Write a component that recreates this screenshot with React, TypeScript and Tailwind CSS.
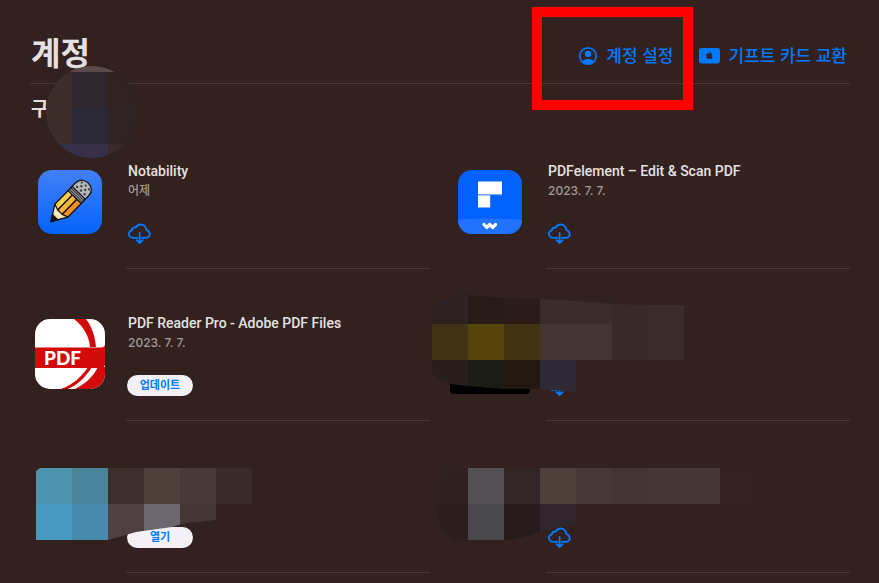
import type { ReactNode } from 'react';

const BG = '#32211f';

/** x, y, width, height, fill */
type Cell = [number, number, number, number, string];

interface MosaicProps {
  id: string;
  width: number;
  height: number;
  outline: string;
  cells: Cell[];
  className: string;
}

function Mosaic({ id, width, height, outline, cells, className }: MosaicProps) {
  return (
    <svg
      width={width}
      height={height}
      viewBox={`0 0 ${width} ${height}`}
      className={`absolute pointer-events-none ${className}`}
      aria-hidden="true"
    >
      <clipPath id={id}>
        <path d={outline} />
      </clipPath>
      <g clipPath={`url(#${id})`} shapeRendering="crispEdges">
        {cells.map(([x, y, w, h, fill]) => (
          <rect key={`${x}-${y}`} x={x} y={y} width={w} height={h} fill={fill} />
        ))}
      </g>
    </svg>
  );
}

function AccountIcon() {
  return (
    <svg width="20" height="20" viewBox="0 0 20 20" fill="none" aria-hidden="true">
      <clipPath id="account-ring">
        <circle cx="10" cy="10" r="8" />
      </clipPath>
      <circle cx="10" cy="10" r="8.2" stroke="currentColor" strokeWidth="1.7" />
      <circle cx="10" cy="8" r="3.2" fill="currentColor" />
      <ellipse cx="10" cy="17.3" rx="6.4" ry="4.4" fill="currentColor" clipPath="url(#account-ring)" />
    </svg>
  );
}

function GiftCardIcon() {
  return (
    <svg width="21" height="16" viewBox="0 0 21 16" aria-hidden="true">
      <rect width="21" height="15.5" rx="2.4" fill="currentColor" />
      <path
        d="M10.4 5.6c.5 0 1-.5 1.7-.4.6 0 1 .3 1.3.7-1.3.8-1.1 2.5.2 3.1-.3.9-1 1.9-1.7 1.9-.5 0-.8-.3-1.4-.3s-.9.3-1.4.3C8 10.9 7.2 9.3 7.2 7.8c0-1.6.9-2.5 1.9-2.5.6 0 1 .3 1.3.3z"
        fill={BG}
      />
      <path d="M10.4 5.1c0-1 .7-1.8 1.7-1.9.1 1-.7 1.9-1.7 1.9z" fill={BG} />
    </svg>
  );
}

function CloudDownloadIcon() {
  return (
    <svg width="23" height="22" viewBox="0 0 24 22" fill="none" aria-hidden="true">
      <path
        d="M9.8 15H5.6C3.1 15 1 13.3 1 11c0-2 1.3-3.4 3.1-3.7C4 5.2 5.8 3.8 7.9 4.3 8.9 2.2 11 1.1 13.2 1.1c3.4 0 5.8 2.5 5.9 5.8 2.1.5 3.6 2 3.6 4 0 2.4-1.9 4.1-4.3 4.1h-4"
        stroke="currentColor"
        strokeWidth="1.9"
        strokeLinecap="round"
        strokeLinejoin="round"
      />
      <path
        d="M12.1 9.8v10.5M8.9 17.4l3.2 3 3.2-3"
        stroke="currentColor"
        strokeWidth="1.9"
        strokeLinecap="round"
        strokeLinejoin="round"
      />
    </svg>
  );
}

function NotabilityIcon() {
  return (
    <svg width="64" height="64" viewBox="0 0 64 64" role="img" aria-label="Notability">
      <defs>
        <linearGradient id="nota-bg" x1="0" y1="0" x2="0" y2="1">
          <stop offset="0" stopColor="#4380f6" />
          <stop offset="1" stopColor="#0463fb" />
        </linearGradient>
      </defs>
      <rect width="64" height="64" rx="14" fill="url(#nota-bg)" />
      <g
        transform="translate(13 51.5) rotate(-46) scale(1 1.15)"
        stroke="#17130f"
        strokeWidth="1.2"
        strokeLinejoin="round"
      >
        <path d="M0 0 15-8v16z" fill="#f6e6bd" />
        <path d="M0 0 6-3.2v6.4z" fill="#17130f" />
        <path d="M15-8h19v5.3H13z" fill="#fbd04a" />
        <path d="M13-2.7h21v5.4H13z" fill="#f9b53b" />
        <path d="M13 2.7h21V8H15z" fill="#ef9027" />
        <path d="M34-8h6V8h-6z" fill="#8d9299" />
        <path d="M36-8V8M38-8V8" strokeWidth=".8" />
        <path d="M40-8h5c5.5 0 8.5 3.5 8.5 8S50.5 8 45 8h-5z" fill="#b4b7ba" />
      </g>
      <g transform="translate(13 51.5) rotate(-46) scale(1 1.15)" fill="#34353a">
        <circle cx="43" cy="-4.5" r="1.1" />
        <circle cx="43" cy="0" r="1.1" />
        <circle cx="43" cy="4.5" r="1.1" />
        <circle cx="46.5" cy="-2.3" r="1.1" />
        <circle cx="46.5" cy="2.3" r="1.1" />
        <circle cx="49.5" cy="-4.3" r="1" />
        <circle cx="50" cy="0" r="1" />
        <circle cx="49.5" cy="4.3" r="1" />
      </g>
    </svg>
  );
}

function PdfElementIcon() {
  return (
    <svg width="64" height="64" viewBox="0 0 64 64" role="img" aria-label="PDFelement">
      <clipPath id="pdfelement-tile">
        <rect width="64" height="64" rx="14" />
      </clipPath>
      <g clipPath="url(#pdfelement-tile)">
        <path d="M0 0h64v64H0z" fill="#0061ff" />
        <path d="M0 50c18-2 46-2 64 0v14H0z" fill="#2272ff" />
        <path d="M20 11.5h24V24H20zM20 25.3h12.2v12.2H20z" fill="#fff" />
        <path d="M20 24h24v1.3H20z" fill="#6ea4ff" />
        <path
          d="M26 54.5l2.8 3 3-3 2.8 3 3-3"
          fill="none"
          stroke="#fff"
          strokeWidth="3.2"
          strokeLinecap="round"
          strokeLinejoin="round"
        />
      </g>
    </svg>
  );
}

function PdfReaderIcon() {
  return (
    <svg width="70" height="70" viewBox="0 0 70 70" role="img" aria-label="PDF Reader Pro">
      <clipPath id="pdfreader-tile">
        <rect width="70" height="70" rx="15" />
      </clipPath>
      <g clipPath="url(#pdfreader-tile)">
        <path d="M0 0h70v70H0z" fill="#fff" />
        <path d="M39 0h12c6 8 9 17 10 28h-6C54 17 49 8 39 0z" fill="#d20a0a" />
        <path d="M63 48h7v22H40c10-5 18-12 23-22z" fill="#d20a0a" />
        <path d="M53 48h4C50 59 42 67 30 71h-7c13-4 23-12 30-23z" fill="#d20a0a" />
        <path d="M0 28.5h66c2 0 3-1 4-2V46c-1 2-2 3-4 3H0z" fill="#d20a0a" />
      </g>
      <text x="9" y="45.5" fill="#fff" className="font-['Lato',sans-serif] text-[19px] font-black">
        PDF
      </text>
    </svg>
  );
}

interface PurchaseProps {
  icon?: ReactNode;
  name?: string;
  date?: string;
  action: 'download' | 'update' | 'open';
  children?: ReactNode;
}

const actionLabels = {
  download: '다운로드',
  update: '업데이트',
  open: '열기',
};

function Purchase({ icon, name, date, action, children }: PurchaseProps) {
  return (
    <li className="relative flex h-[109px] gap-4">
      <div className="flex w-20 h-[84px] shrink-0 items-center justify-center">{icon}</div>
      <div className="flex flex-1 min-w-0 flex-col border-b border-[#4b3937] pt-px pl-0.5">
        <h3 className="h-5 font-['Roboto','Noto_Sans_CJK_KR',sans-serif] text-[14px] leading-5 font-medium text-[#e6e1e0] truncate">
          {name}
        </h3>
        <p className="h-5 text-[12px] leading-5 font-medium text-[#a39a99]">{date}</p>
        <div className="mt-[22px] flex items-start">
          {action === 'download' ? (
            <button type="button" aria-label={actionLabels[action]} className="text-[#007aff]">
              <CloudDownloadIcon />
            </button>
          ) : (
            <button
              type="button"
              className="-ml-px h-[21px] w-[66px] rounded-full bg-[#f3f1f7] text-[11px] leading-[21px] font-bold text-[#007aff]"
            >
              {actionLabels[action]}
            </button>
          )}
        </div>
      </div>
      {children}
    </li>
  );
}

export default function App() {
  return (
    <main className="min-h-screen bg-[#32211f] pl-[30px] pr-[29px] pb-2 font-['Inter','Noto_Sans_CJK_KR',sans-serif]">
      <header className="flex items-center justify-between border-b border-[#4b3937] pt-[34px] pb-[9px] pl-px">
        <h1 className="text-[32px] leading-10 font-bold text-[#e6e1e0]">계정</h1>
        <div className="flex items-center gap-[26px] pt-1 pr-[3px] text-[17px] leading-6 font-medium text-[#007aff]">
          <button type="button" className="relative flex items-center gap-2">
            <AccountIcon />
            계정 설정
            <span className="absolute -left-[46px] -right-5 -top-[37px] h-[103px] border-10 border-[#ff0000]" />
          </button>
          <button type="button" className="flex items-center gap-2">
            <GiftCardIcon />
            기프트 카드 교환
          </button>
        </div>
      </header>

      <section className="relative">
        <h2 className="pt-3.5 pl-px text-[19px] leading-6 font-bold text-[#e6e1e0]">구</h2>
        <Mosaic
          id="mosaic-profile"
          width={92}
          height={92}
          outline="M46 0a46 46 0 1 1 0 92a46 46 0 1 1 0-92z"
          className="left-4 -top-[18px]"
          cells={[
            [0, 0, 92, 6, '#5b4a49'],
            [0, 6, 26, 72, '#3e2e2b'],
            [26, 6, 36, 36, '#30272d'],
            [62, 6, 30, 36, '#312322'],
            [26, 42, 36, 36, '#2b2936'],
            [62, 42, 30, 36, '#302324'],
            [0, 78, 26, 14, '#34314b'],
            [26, 78, 36, 14, '#363148'],
            [62, 78, 30, 14, '#3a2b28'],
          ]}
        />

        <ul className="mt-[38px] grid grid-cols-2 gap-x-5 gap-y-[43px]">
          <Purchase icon={<NotabilityIcon />} name="Notability" date="어제" action="download" />
          <Purchase
            icon={<PdfElementIcon />}
            name="PDFelement – Edit & Scan PDF"
            date="2023. 7. 7."
            action="download"
          />
          <Purchase
            icon={<PdfReaderIcon />}
            name="PDF Reader Pro - Adobe PDF Files"
            date="2023. 7. 7."
            action="update"
          />
          <Purchase icon={<div className="h-20 w-20 rounded bg-black" />} action="download">
            <Mosaic
              id="mosaic-2"
              width={288}
              height={97}
              outline="M0 10Q14 0 36 0L72 3 108 4 144 6 180 9 216 10 288 10V65H144V97L108 94H72L36 91 26 90Q10 88 0 78z"
              className="-left-[18px] -top-[17px]"
              cells={[
                [0, 0, 36, 29, '#2d2123'],
                [36, 0, 36, 29, '#271b19'],
                [72, 0, 36, 29, '#2b1c19'],
                [108, 0, 72, 29, '#3c2d2a'],
                [180, 0, 36, 29, '#392a27'],
                [216, 0, 36, 29, '#3c2d2a'],
                [252, 0, 36, 65, '#33211f'],
                [0, 29, 36, 36, '#423216'],
                [36, 29, 36, 36, '#55450a'],
                [72, 29, 36, 36, '#423312'],
                [108, 29, 72, 36, '#443532'],
                [180, 29, 36, 36, '#392a27'],
                [216, 29, 36, 36, '#3c2d2a'],
                [0, 65, 36, 32, '#281e1c'],
                [36, 65, 36, 32, '#1c1c17'],
                [72, 65, 36, 32, '#211811'],
                [108, 65, 36, 32, '#2d2a35'],
              ]}
            />
          </Purchase>
          <Purchase action="open">
            <Mosaic
              id="mosaic-3"
              width={216}
              height={72}
              outline="M4 0H216V36H180V52L150 55Q142 57 136 59L100 64 72 72H0V3z"
              className="left-1.5 top-1"
              cells={[
                [0, 0, 36, 36, '#4d93ae'],
                [36, 0, 36, 36, '#48839a'],
                [72, 0, 36, 36, '#3f2f2c'],
                [108, 0, 36, 36, '#50403c'],
                [144, 0, 36, 36, '#493a37'],
                [180, 0, 36, 36, '#3b2b29'],
                [0, 36, 36, 36, '#4998bf'],
                [36, 36, 36, 36, '#488aad'],
                [72, 36, 36, 36, '#504041'],
                [108, 36, 36, 36, '#6b676f'],
                [144, 36, 36, 36, '#473734'],
              ]}
            />
          </Purchase>
          <Purchase action="download">
            <Mosaic
              id="mosaic-4"
              width={320}
              height={72}
              outline="M14 0H320V36H140V56L118 60 104 64 76 72H18Q0 58 0 36Q0 14 14 0z"
              className="-left-3.5 top-1"
              cells={[
                [0, 0, 32, 36, '#2e2120'],
                [32, 0, 36, 36, '#525053'],
                [68, 0, 36, 36, '#312625'],
                [104, 0, 36, 36, '#50403c'],
                [140, 0, 36, 36, '#483835'],
                [176, 0, 36, 36, '#443431'],
                [212, 0, 72, 36, '#473734'],
                [284, 0, 36, 36, '#342220'],
                [0, 36, 32, 36, '#2b1e1d'],
                [32, 36, 36, 36, '#49484c'],
                [68, 36, 36, 36, '#261b1a'],
                [104, 36, 36, 36, '#30262c'],
              ]}
            />
          </Purchase>
        </ul>
      </section>
    </main>
  );
}
